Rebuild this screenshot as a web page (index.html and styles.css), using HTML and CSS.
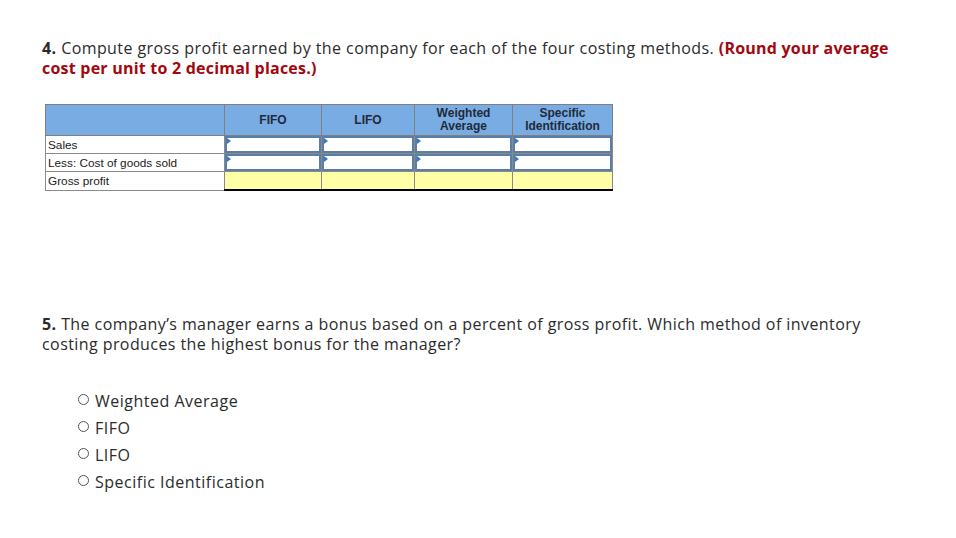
FILE: index.html
```html
<!DOCTYPE html>
<html>
<head>
<meta charset="utf-8">
<link rel="stylesheet" href="styles.css">
</head>
<body>
<div class="page">
  <p class="q q4"><b>4.</b> Compute gross profit earned by the company for each of the four costing methods. <span class="hint">(Round your average cost per unit to 2 decimal places.)</span></p>

  <table class="grid">
    <colgroup>
      <col class="c-label"><col class="c-fifo"><col class="c-lifo"><col class="c-wa"><col class="c-si">
    </colgroup>
    <thead>
      <tr>
        <th></th>
        <th>FIFO</th>
        <th>LIFO</th>
        <th>Weighted<br>Average</th>
        <th>Specific<br>Identification</th>
      </tr>
    </thead>
    <tbody>
      <tr>
        <td class="label">Sales</td>
        <td class="in"><span class="box"></span></td>
        <td class="in"><span class="box"></span></td>
        <td class="in"><span class="box"></span></td>
        <td class="in"><span class="box"></span></td>
      </tr>
      <tr>
        <td class="label">Less: Cost of goods sold</td>
        <td class="in"><span class="box"></span></td>
        <td class="in"><span class="box"></span></td>
        <td class="in"><span class="box"></span></td>
        <td class="in"><span class="box"></span></td>
      </tr>
      <tr>
        <td class="label">Gross profit</td>
        <td class="total"></td>
        <td class="total"></td>
        <td class="total"></td>
        <td class="total"></td>
      </tr>
    </tbody>
  </table>

  <p class="q q5"><b>5.</b> The company’s manager earns a bonus based on a percent of gross profit. Which method of inventory costing produces the highest bonus for the manager?</p>

  <ul class="opts">
    <li><span class="radio"></span>Weighted Average</li>
    <li><span class="radio"></span>FIFO</li>
    <li><span class="radio"></span>LIFO</li>
    <li><span class="radio"></span>Specific Identification</li>
  </ul>
</div>
</body>
</html>
```

FILE: styles.css
```css
html, body {
  margin: 0;
  padding: 0;
  background: #ffffff;
}
.page {
  padding: 38px 0 0 42px;
  font-family: "Open Sans", "Lato", sans-serif;
  color: #2b2b2b;
}
.q {
  margin: 0;
  font-size: 16px;
  line-height: 20px;
  width: 870px;
  letter-spacing: 0.42px;
}
.q b {
  font-weight: 700;
}
.hint {
  color: #a3070e;
  font-weight: 700;
  letter-spacing: 0.22px;
}
.grid {
  margin: 26px 0 0 3px;
  border-collapse: collapse;
  table-layout: fixed;
  width: 568px;
  font-family: "Liberation Sans", Arial, sans-serif;
  color: #1a1a1a;
}
.c-label { width: 179px; }
.c-fifo { width: 97px; }
.c-lifo { width: 93px; }
.c-wa { width: 98px; }
.c-si { width: 100px; }
.grid th {
  background: #7aace4;
  border: 1px solid #7f7f7f;
  height: 30px;
  padding: 0;
  font-size: 12px;
  line-height: 13px;
  font-weight: 700;
  color: #1e2a3a;
}
.grid td {
  border: 1px solid #8a8a8a;
  height: 17px;
  padding: 0;
  font-size: 11.8px;
}
.grid td.label {
  padding-left: 2px;
}
.grid td.in {
  padding: 0;
  position: relative;
}
.box {
  display: block;
  height: 13px;
  border: 2px solid #5b7ea6;
  background: #ffffff;
  position: relative;
}
.box::before {
  content: "";
  position: absolute;
  left: 0;
  top: 0;
  border-left: 4px solid #3b78c4;
  border-top: 3px solid transparent;
  border-bottom: 3px solid transparent;
}
.grid td.total {
  background: #ffffa8;
  border-top: 1px solid #1a1a1a;
  border-bottom: 2px solid #000000;
}
.q5 {
  margin-top: 123px;
}
.opts {
  list-style: none;
  margin: 37px 0 0 34px;
  padding: 0;
  font-size: 16px;
  letter-spacing: 0.5px;
}
.opts li {
  height: 27px;
  line-height: 20px;
  display: flex;
  align-items: flex-start;
}
.radio {
  width: 9px;
  height: 9px;
  border: 1px solid #555;
  border-radius: 50%;
  margin: 3px 6px 0 2px;
  flex: none;
}
```
